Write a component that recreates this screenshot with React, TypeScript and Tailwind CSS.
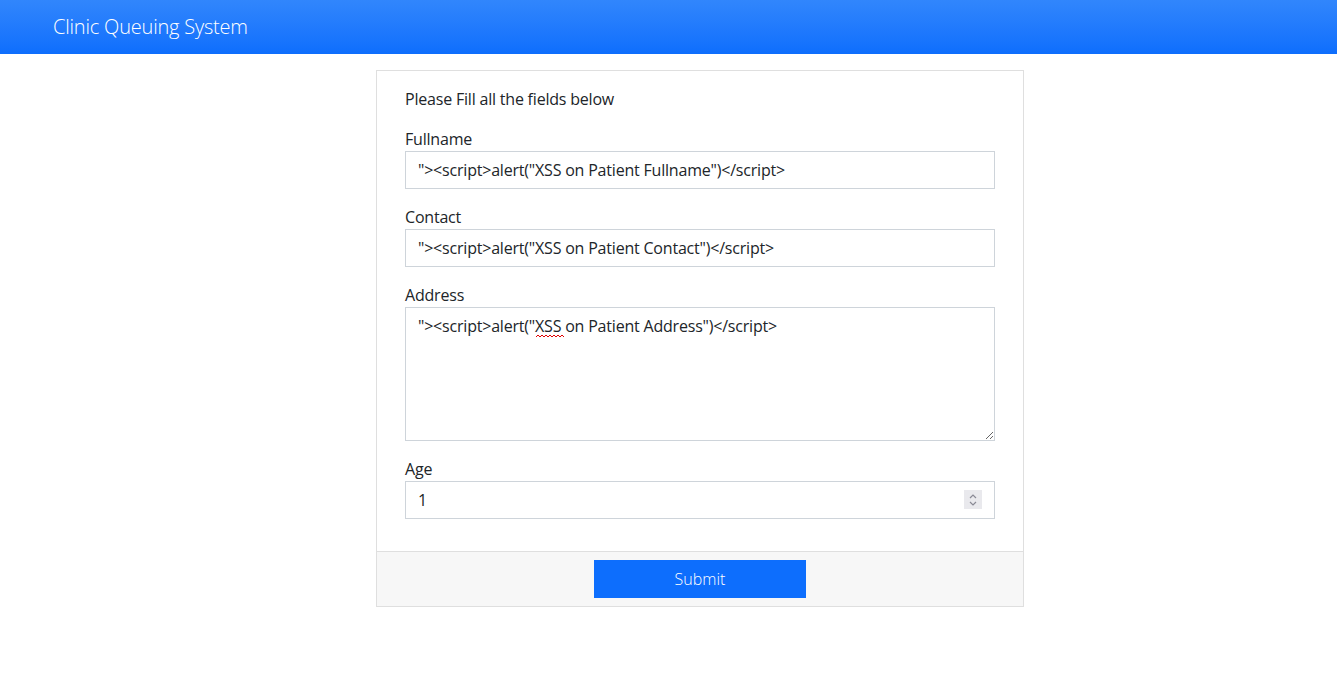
import { useState } from 'react';

const fieldClass =
	"block w-full h-[38px] border border-[#ced4da] bg-white px-3 text-[16px] tracking-[-0.2px] text-[#212529] outline-none";

export default function App() {
	const [fullname, setFullname] = useState('"><script>alert("XSS on Patient Fullname")</script>');
	const [contact, setContact] = useState('"><script>alert("XSS on Patient Contact")</script>');
	const [address, setAddress] = useState('"><script>alert("XSS on Patient Address")</script>');
	const [age, setAge] = useState('1');

	return (
		<div className="min-h-screen bg-white text-[#212529] font-['Open_Sans',sans-serif]">
			<nav className="h-[54px] bg-gradient-to-b from-[#3186fc] to-[#0d6efd] flex items-center px-[53px]">
				<span className="text-white text-[20px] font-light tracking-[-0.2px]">Clinic Queuing System</span>
			</nav>

			<div className="ml-[376px] mt-4 w-[648px] border border-[#dfdfdf]">
				<form className="px-7 pt-4 pb-4 tracking-[-0.2px]" onSubmit={(e) => e.preventDefault()}>
					<p className="text-[16px] leading-6 mb-4">Please Fill all the fields below</p>

					<div className="mb-4">
						<label className="block text-[16px] leading-6">Fullname</label>
						<input className={fieldClass} type="text" value={fullname} onChange={(e) => setFullname(e.target.value)} />
					</div>

					<div className="mb-4">
						<label className="block text-[16px] leading-6">Contact</label>
						<input className={fieldClass} type="text" value={contact} onChange={(e) => setContact(e.target.value)} />
					</div>

					<div className="mb-4">
						<label className="block text-[16px] leading-6">Address</label>
						<div className="relative">
							<textarea
								className="block w-full h-[134px] border border-[#ced4da] bg-white px-3 py-[6px] text-[16px] leading-6 tracking-[-0.2px] text-[#212529] outline-none"
								value={address}
								onChange={(e) => setAddress(e.target.value)}
							/>
							{/* spellcheck squiggle */}
							<svg className="absolute left-[131px] top-[27px] pointer-events-none" width="28" height="4" viewBox="0 0 28 4">
								<path d="M0 3 L2 1 L4 3 L6 1 L8 3 L10 1 L12 3 L14 1 L16 3 L18 1 L20 3 L22 1 L24 3 L26 1 L28 3" fill="none" stroke="#e00000" strokeWidth="1" />
							</svg>
						</div>
					</div>

					<div className="mb-4">
						<label className="block text-[16px] leading-6">Age</label>
						<div className="relative">
							<input
								className={fieldClass + " [appearance:textfield] [&::-webkit-inner-spin-button]:appearance-none [&::-webkit-outer-spin-button]:appearance-none"}
								type="number"
								value={age}
								onChange={(e) => setAge(e.target.value)}
							/>
							<div className="absolute right-[13px] top-[9px] w-[18px] h-[19px] bg-[#e9e9ed] flex items-center justify-center pointer-events-none">
								<svg width="10" height="14" viewBox="0 0 10 14" fill="none" stroke="#8a8a95" strokeWidth="1.2">
									<path d="M2 5 L5 2 L8 5" />
									<path d="M2 9 L5 12 L8 9" />
								</svg>
							</div>
						</div>
					</div>
				</form>

				<div className="border-t border-[#dfdfdf] bg-[#f7f7f7] py-2 flex justify-center">
					<button className="w-[212px] h-[38px] bg-[#0d6efd] text-white text-[16px] font-light" type="submit">
						Submit
					</button>
				</div>
			</div>
		</div>
	);
}
